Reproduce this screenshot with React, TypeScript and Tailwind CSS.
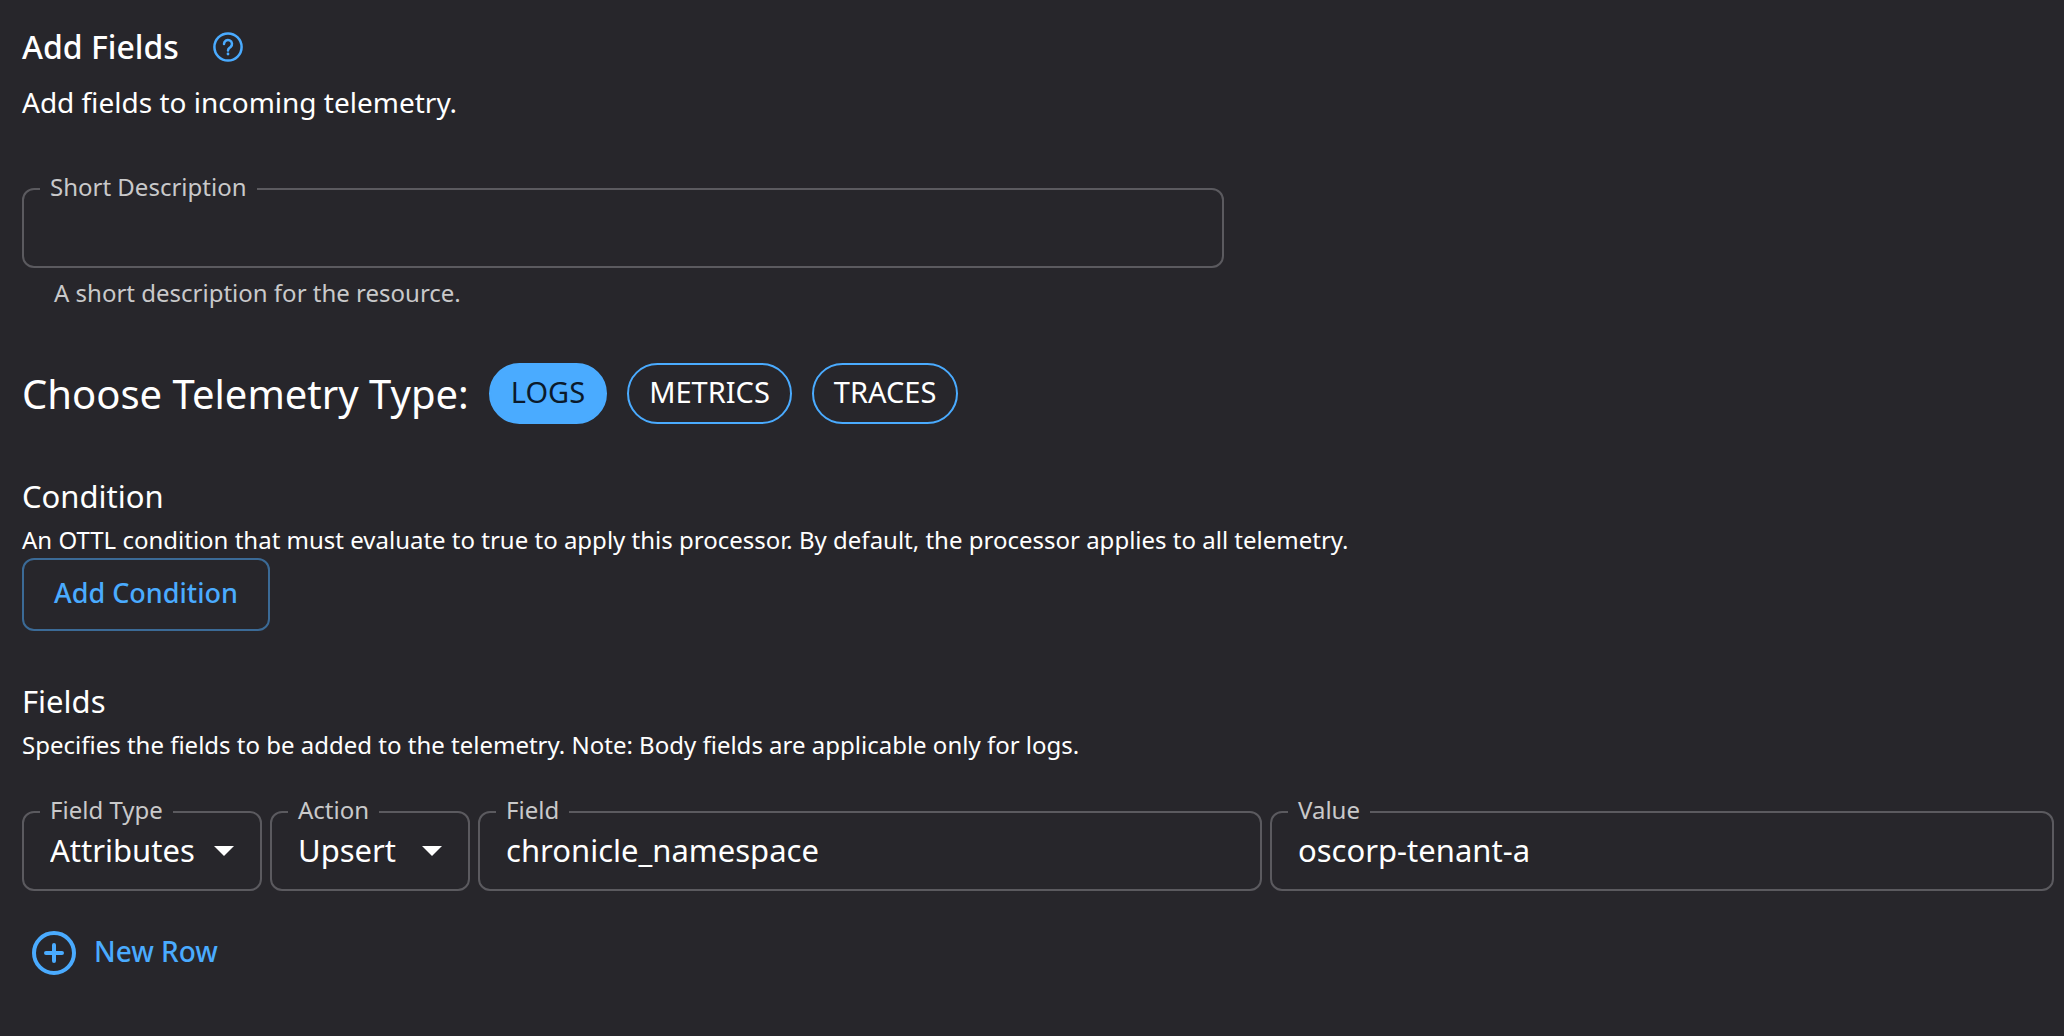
import React, { useState } from 'react';

type OutlinedProps = {
  id: string;
  label: string;
  className?: string;
  children: React.ReactNode;
};

const Outlined = ({ id, label, className = '', children }: OutlinedProps) => {
  return (
    <fieldset className={`min-w-0 rounded-xl border-2 border-[#5b5a5f] px-4 ${className}`}>
      <legend className="px-[10px] pb-1 text-[24px] leading-7 text-[#c9c9ca]">
        <label htmlFor={id}>{label}</label>
      </legend>
      {children}
    </fieldset>
  );
};

type TextFieldProps = {
  id: string;
  label: string;
  initial?: string;
  className?: string;
};

const TextField = ({ id, label, initial = '', className }: TextFieldProps) => {
  const [value, setValue] = useState(initial);

  return (
    <Outlined id={id} label={label} className={className}>
      <input
        id={id}
        type="text"
        value={value}
        onChange={(e) => setValue(e.target.value)}
        className="mb-[17px] block h-11 w-full bg-transparent px-[10px] text-[31px] leading-[44px] text-white outline-none"
      />
    </Outlined>
  );
};

type SelectFieldProps = {
  id: string;
  label: string;
  options: string[];
  className?: string;
};

const SelectField = ({ id, label, options, className }: SelectFieldProps) => {
  const [value, setValue] = useState(options[0]);

  return (
    <Outlined id={id} label={label} className={className}>
      <div className="relative mb-[17px]">
        <select
          id={id}
          value={value}
          onChange={(e) => setValue(e.target.value)}
          className="block h-11 w-full appearance-none bg-transparent px-[10px] text-[31px] leading-[44px] text-white outline-none"
        >
          {options.map((option) => (
            <option key={option} className="bg-[#27262b]">
              {option}
            </option>
          ))}
        </select>
        <svg
          viewBox="0 0 20 10"
          className="pointer-events-none absolute top-[18px] right-[10px] h-[10px] w-5"
          fill="#fff"
        >
          <path d="M0 0h20L10 10z" />
        </svg>
      </div>
    </Outlined>
  );
};

const types = ['LOGS', 'METRICS', 'TRACES'];

const App: React.FC = () => {
  const [selected, setSelected] = useState('LOGS');

  return (
    <div className="min-h-screen bg-[#27262b] px-[22px] pt-6 pr-[10px] font-['Noto_Sans','Open_Sans',sans-serif] text-white">
      <div className="flex items-center gap-[34px]">
        <h1 className="text-[32px] leading-[46px] font-medium">Add Fields</h1>
        <button type="button" aria-label="Help">
          <svg viewBox="0 0 30 30" className="h-[30px] w-[30px]" fill="none" stroke="#4aabff" strokeWidth="2.5">
            <circle cx="15" cy="15" r="13.600" />
            <path d="M11 12a4 4 0 1 1 6.600 3c-1.400 1.100-2.600 1.600-2.600 3.400" strokeLinecap="round" />
            <circle cx="15" cy="22" r="1.400" fill="#4aabff" stroke="none" />
          </svg>
        </button>
      </div>
      <p className="mt-3 text-[28px] leading-10">Add fields to incoming telemetry.</p>

      <div className="mt-[51px] w-[1202px] max-w-full">
        <TextField id="description" label="Short Description" />
        <p className="mt-[9px] ml-8 text-[24px] leading-8 text-[#c9c9ca]">A short description for the resource.</p>
      </div>

      <div className="mt-[54px] flex items-center">
        <h2 className="mr-5 text-[40px] leading-[60px]">Choose Telemetry Type:</h2>
        <div className="flex gap-5">
          {types.map((type) => (
            <button
              key={type}
              type="button"
              aria-pressed={selected === type}
              onClick={() => setSelected(type)}
              className={`h-[61px] rounded-full border-2 border-[#4aabff] px-5 pb-1 text-[29px] leading-10 ${
                selected === type ? 'bg-[#4aabff] text-[#0b1a2b]' : 'text-white'
              }`}
            >
              {type}
            </button>
          ))}
        </div>
      </div>

      <h3 className="mt-12 text-[31px] leading-[48px]">Condition</h3>
      <p className="mt-0.5 text-[24px] leading-9">
        An OTTL condition that must evaluate to true to apply this processor. By default, the processor applies to all
        telemetry.
      </p>
      <button
        type="button"
        className="block h-[73px] rounded-xl border-2 border-[#3b6a96] px-[30px] pb-1 text-[27px] leading-10 font-medium text-[#4aabff]"
      >
        Add Condition
      </button>

      <h3 className="mt-[46px] text-[31px] leading-[48px]">Fields</h3>
      <p className="mt-0.5 text-[24px] leading-9">
        Specifies the fields to be added to the telemetry. Note: Body fields are applicable only for logs.
      </p>
      <div className="mt-[33px] flex gap-2">
        <SelectField
          id="field-type"
          label="Field Type"
          options={['Attributes', 'Resource', 'Body']}
          className="w-[240px] shrink-0"
        />
        <SelectField
          id="action"
          label="Action"
          options={['Upsert', 'Insert', 'Update']}
          className="w-[200px] shrink-0"
        />
        <TextField id="field" label="Field" initial="chronicle_namespace" className="flex-1" />
        <TextField id="value" label="Value" initial="oscorp-tenant-a" className="flex-1" />
      </div>

      <button
        type="button"
        className="mt-10 ml-[10px] flex items-center gap-[18px] text-[28px] leading-10 font-medium text-[#4aabff]"
      >
        <svg viewBox="0 0 44 44" className="h-11 w-11" fill="none" stroke="#4aabff" strokeWidth="4" strokeLinecap="round">
          <circle cx="22" cy="22" r="20" />
          <path d="M14 22h16M22 14v16" />
        </svg>
        <span className="pb-1">New Row</span>
      </button>
    </div>
  );
};

export default App;
